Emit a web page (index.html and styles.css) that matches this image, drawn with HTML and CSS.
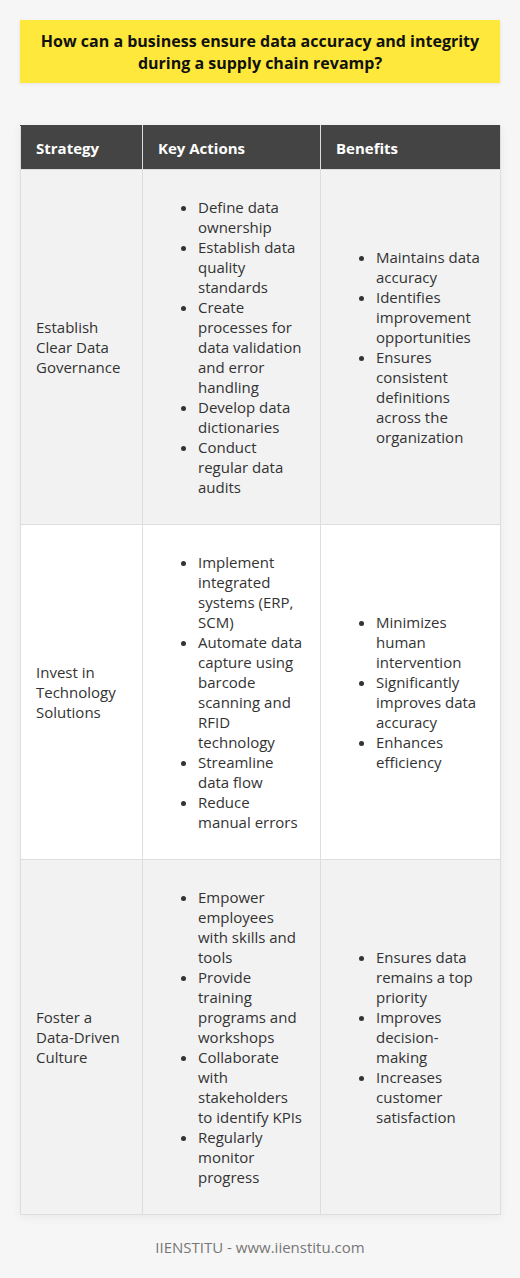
FILE: index.html
```html
<!DOCTYPE html>
<html lang="en">
<head>
<meta charset="utf-8">
<title>Data accuracy and integrity</title>
<link rel="stylesheet" href="styles.css">
</head>
<body>
<div class="page">
  <h1 class="title">How can a business ensure data accuracy and integrity during a supply chain revamp?</h1>
  <table class="grid">
    <colgroup>
      <col class="c1"><col class="c2"><col class="c3">
    </colgroup>
    <thead>
      <tr><th>Strategy</th><th>Key Actions</th><th>Benefits</th></tr>
    </thead>
    <tbody>
      <tr class="alt">
        <td>Establish Clear Data Governance</td>
        <td><ul>
          <li>Define data ownership</li>
          <li>Establish data quality standards</li>
          <li>Create processes for data validation and error handling</li>
          <li>Develop data dictionaries</li>
          <li>Conduct regular data audits</li>
        </ul></td>
        <td><ul>
          <li>Maintains data accuracy</li>
          <li>Identifies improvement opportunities</li>
          <li>Ensures consistent definitions across the organization</li>
        </ul></td>
      </tr>
      <tr>
        <td>Invest in Technology Solutions</td>
        <td><ul>
          <li>Implement integrated systems (ERP, SCM)</li>
          <li>Automate data capture using barcode scanning and RFID technology</li>
          <li>Streamline data flow</li>
          <li>Reduce manual errors</li>
        </ul></td>
        <td><ul>
          <li>Minimizes human intervention</li>
          <li>Significantly improves data accuracy</li>
          <li>Enhances efficiency</li>
        </ul></td>
      </tr>
      <tr class="alt">
        <td>Foster a Data-Driven Culture</td>
        <td><ul>
          <li>Empower employees with skills and tools</li>
          <li>Provide training programs and workshops</li>
          <li>Collaborate with stakeholders to identify KPIs</li>
          <li>Regularly monitor progress</li>
        </ul></td>
        <td><ul>
          <li>Ensures data remains a top priority</li>
          <li>Improves decision-making</li>
          <li>Increases customer satisfaction</li>
        </ul></td>
      </tr>
    </tbody>
  </table>
  <p class="footer">IIENSTITU - www.iienstitu.com</p>
</div>
</body>
</html>
```
FILE: styles.css
```css
html, body {
  margin: 0;
  padding: 0;
  background: #f6f6f6;
}
body {
  font-family: "Open Sans", "Liberation Sans", sans-serif;
  color: #333;
}
.page {
  padding: 20px 20px 0 20px;
}
.title {
  margin: 0;
  background: #fde83b;
  color: #111;
  font-size: 16px;
  font-weight: 700;
  line-height: 22px;
  text-align: center;
  padding: 10px 20px 9px;
  box-shadow: 0 1px 4px rgba(0,0,0,0.08);
}
.grid {
  margin-top: 42px;
  width: 480px;
  border-collapse: collapse;
  table-layout: fixed;
  font-size: 15px;
  line-height: 20px;
  box-shadow: 0 2px 10px rgba(0,0,0,0.06);
}
.c1 { width: 122px; }
.c2 { width: 178px; }
.c3 { width: 180px; }
.grid th {
  background: #444;
  color: #fff;
  font-weight: 700;
  text-align: left;
  padding: 12px 15px 11px;
  border: 1px solid #ddd;
  border-top-color: #444;
}
.grid td {
  padding: 13px 15px;
  border: 1px solid #ddd;
  vertical-align: middle;
  background: #fff;
}
.grid tr.alt td {
  background: #f2f2f2;
}
.grid ul {
  margin: 14px 0;
  padding-left: 40px;
}
.footer {
  margin: 22px 0 0;
  text-align: center;
  font-size: 15px;
  color: #777;
  line-height: 20px;
}
```
